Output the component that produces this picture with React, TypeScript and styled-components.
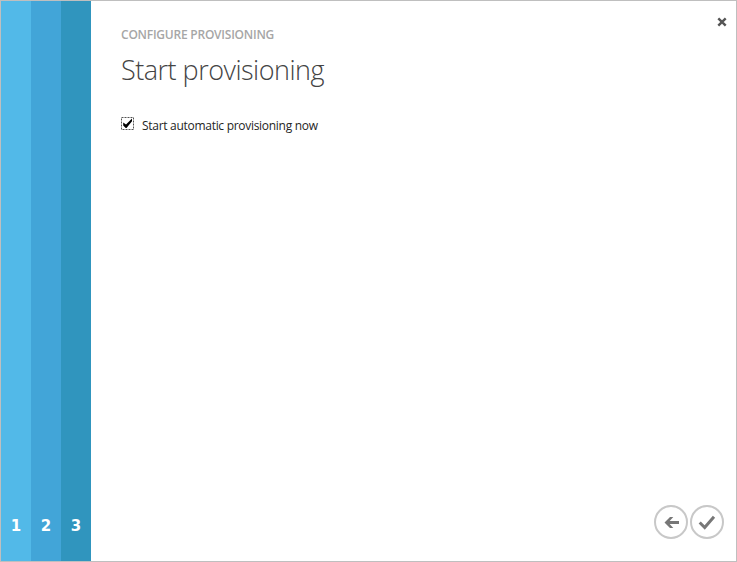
import React, { useState } from 'react';
import styled, { createGlobalStyle } from 'styled-components';

const GlobalStyle = createGlobalStyle`
  *, *::before, *::after { box-sizing: border-box; }
  body { margin: 0; background: #fff; font-family: "Open Sans", "Noto Sans", sans-serif; }
`;

const Dialog = styled.main`
  display: flex;
  width: 737px;
  height: 562px;
  border: 1px solid #bfbfbf;
  background: #fff;
  overflow: hidden;
`;

const Steps = styled.nav`
  display: grid;
  grid-template-columns: repeat(3, 30px);
`;

const Step = styled.div<{ $color: string }>`
  display: flex;
  align-items: flex-end;
  justify-content: center;
  padding-bottom: 25px;
  background: ${({ $color }) => $color};
  color: #fff;
  font: 700 15px/20px "DejaVu Sans", sans-serif;
`;

const Content = styled.section`
  display: flex;
  flex: 1;
  flex-direction: column;
  padding: 0 12px 22px 30px;
`;

const Header = styled.header`
  display: flex;
  justify-content: space-between;
  align-items: flex-start;
  height: 93px;
`;

const Eyebrow = styled.div`
  margin-top: 25px;
  color: #a6a6a6;
  font-size: 12px;
  line-height: 18px;
  font-weight: 600;
  letter-spacing: -0.23px;
  white-space: nowrap;
`;

const Title = styled.h1`
  margin: 6px 0 0;
  color: #444;
  font-size: 27px;
  line-height: 40px;
  font-weight: 300;
  letter-spacing: -0.5px;
  white-space: nowrap;
`;

const IconButton = styled.button`
  display: flex;
  padding: 0;
  border: 0;
  background: none;
  cursor: pointer;
`;

const CloseButton = styled(IconButton)`
  margin: 16px -3px 0 0;
`;

const Option = styled.label`
  display: flex;
  align-items: flex-start;
  margin-top: 23px;
  color: #252525;
  font-size: 12px;
  line-height: 18px;
  letter-spacing: -0.29px;
`;

const HiddenInput = styled.input`
  appearance: none;
  width: 0;
  height: 0;
  margin: 0;
  outline: none;
`;

const OptionText = styled.span`
  margin-left: 8px;
  white-space: nowrap;
`;

const Footer = styled.footer`
  display: flex;
  justify-content: flex-end;
  gap: 2px;
  margin-top: auto;
`;

const steps = [
  { label: '1', color: '#52b9e8' },
  { label: '2', color: '#42a5d8' },
  { label: '3', color: '#3095be' },
];

export default function App() {
  const [checked, setChecked] = useState(true);
  return (
    <>
      <GlobalStyle />
      <Dialog>
        <Steps>
          {steps.map((s) => (
            <Step key={s.label} $color={s.color}>{s.label}</Step>
          ))}
        </Steps>
        <Content>
          <Header>
            <div>
              <Eyebrow>CONFIGURE PROVISIONING</Eyebrow>
              <Title>Start provisioning</Title>
            </div>
            <CloseButton aria-label="Close">
              <svg width="10" height="10" viewBox="0 0 10 10">
                <path d="M1.3 1.3 8.7 8.7M8.7 1.3 1.3 8.7" stroke="#555" strokeWidth="2.4" />
              </svg>
            </CloseButton>
          </Header>
          <Option>
            <HiddenInput type="checkbox" checked={checked} onChange={() => setChecked(!checked)} />
            <svg width="13" height="13" viewBox="0 0 13 13">
              <rect x=".5" y=".5" width="12" height="12" fill="#fff" stroke="#555" strokeDasharray="2 1" />
              {checked && <path d="M2.2 5.5v3l2.5 2.4h.8L11 4.2V1.6L5 7.6Z" fill="#000" />}
            </svg>
            <OptionText>Start automatic provisioning now</OptionText>
          </Option>
          <Footer>
            <IconButton aria-label="Back">
              <svg width="34" height="34" viewBox="0 0 34 34" fill="none">
                <circle cx="17" cy="17" r="16" stroke="#c8c8c8" strokeWidth="2" />
                <path d="M25 17.5H13" stroke="#777" strokeWidth="3" />
                <path d="M10.5 17.5 16 12h3.3l-5 5.5 5 5.5H16Z" fill="#777" />
              </svg>
            </IconButton>
            <IconButton aria-label="Complete">
              <svg width="34" height="34" viewBox="0 0 34 34" fill="none">
                <circle cx="17" cy="17" r="16" stroke="#c8c8c8" strokeWidth="2" />
                <path d="m9.7 17.5 5 5L24 11.7" stroke="#777" strokeWidth="3" />
              </svg>
            </IconButton>
          </Footer>
        </Content>
      </Dialog>
    </>
  );
}
